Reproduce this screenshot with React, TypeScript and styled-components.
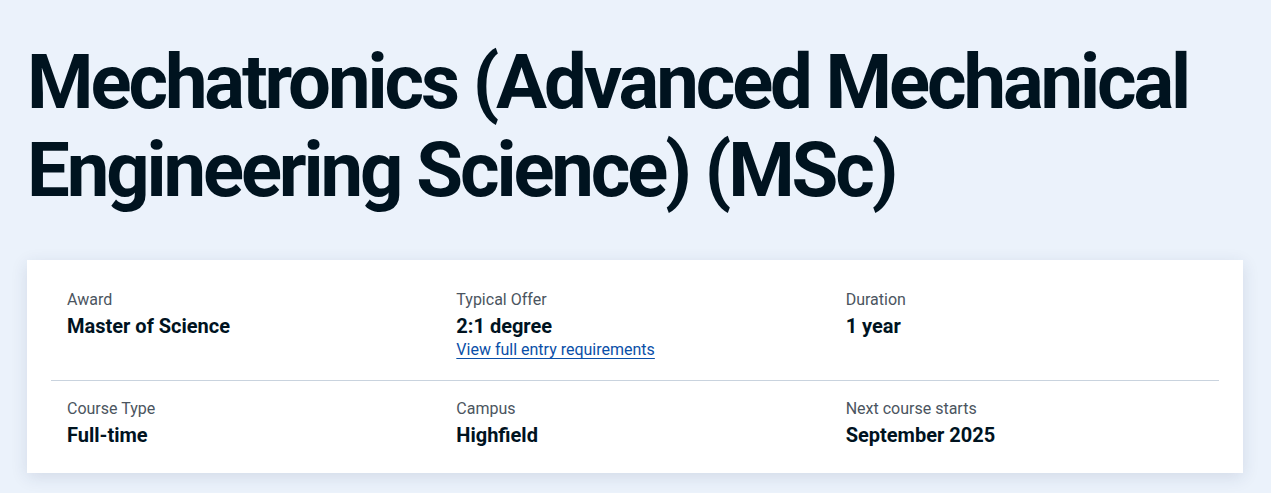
import React from "react";
import styled, {createGlobalStyle} from "styled-components";

// global

const GlobalStyle = createGlobalStyle`
    html, body {
        margin: 0;
        padding: 0;
        background-color: #ebf2fb;
        font-family: Roboto, "Liberation Sans", sans-serif;
    }
    * {
        box-sizing: border-box;
    }
`;

// styled components

const Page = styled.div`
    padding: 38px 28px 20px 27px;
`;

const Title = styled.h1`
    margin: 0 0 46px 0;
    font-size: 76px;
    line-height: 88px;
    font-weight: 700;
    color: #00131f;
    letter-spacing: -3.1px;
`;

const Card = styled.div`
    background-color: #ffffff;
    padding: 12px 24px 8px 24px;
    box-shadow: 0 4px 16px rgba(30, 50, 90, 0.12);
`;

const Row = styled.div<{ $divider?: boolean }>`
    display: grid;
    grid-template-columns: repeat(3, 1fr);
    border-bottom: ${(p) => (p.$divider ? "1px solid #c9d3de" : "none")};
`;

const Cell = styled.div`
    padding: 16px 16px;
    display: flex;
    flex-direction: column;
`;

const Label = styled.div`
    font-size: 16px;
    line-height: 24px;
    color: #4b5560;
`;

const Value = styled.div`
    font-size: 20px;
    line-height: 28px;
    font-weight: 700;
    color: #00131f;
`;

const EntryLink = styled.a`
    align-self: flex-start;
    margin-bottom: 4px;
    font-size: 16px;
    line-height: 20px;
    color: #0a4fa8;
    text-decoration: underline;
    text-underline-offset: 3px;
    text-decoration-thickness: 1px;
`;

const rows = [
    [
        {label: "Award", value: "Master of Science"},
        {label: "Typical Offer", value: "2:1 degree", link: "View full entry requirements"},
        {label: "Duration", value: "1 year"},
    ],
    [
        {label: "Course Type", value: "Full-time"},
        {label: "Campus", value: "Highfield"},
        {label: "Next course starts", value: "September 2025"},
    ],
];

function App() {
    return (
        <>
            <GlobalStyle />
            <Page>
                <Title>Mechatronics (Advanced Mechanical Engineering Science) (MSc)</Title>
                <Card>
                    {rows.map((row, i) => (
                        <Row key={i} $divider={i === 0}>
                            {row.map((item) => (
                                <Cell key={item.label}>
                                    <Label>{item.label}</Label>
                                    <Value>{item.value}</Value>
                                    {item.link && <EntryLink href="#">{item.link}</EntryLink>}
                                </Cell>
                            ))}
                        </Row>
                    ))}
                </Card>
            </Page>
        </>
    );
}

export default App;
